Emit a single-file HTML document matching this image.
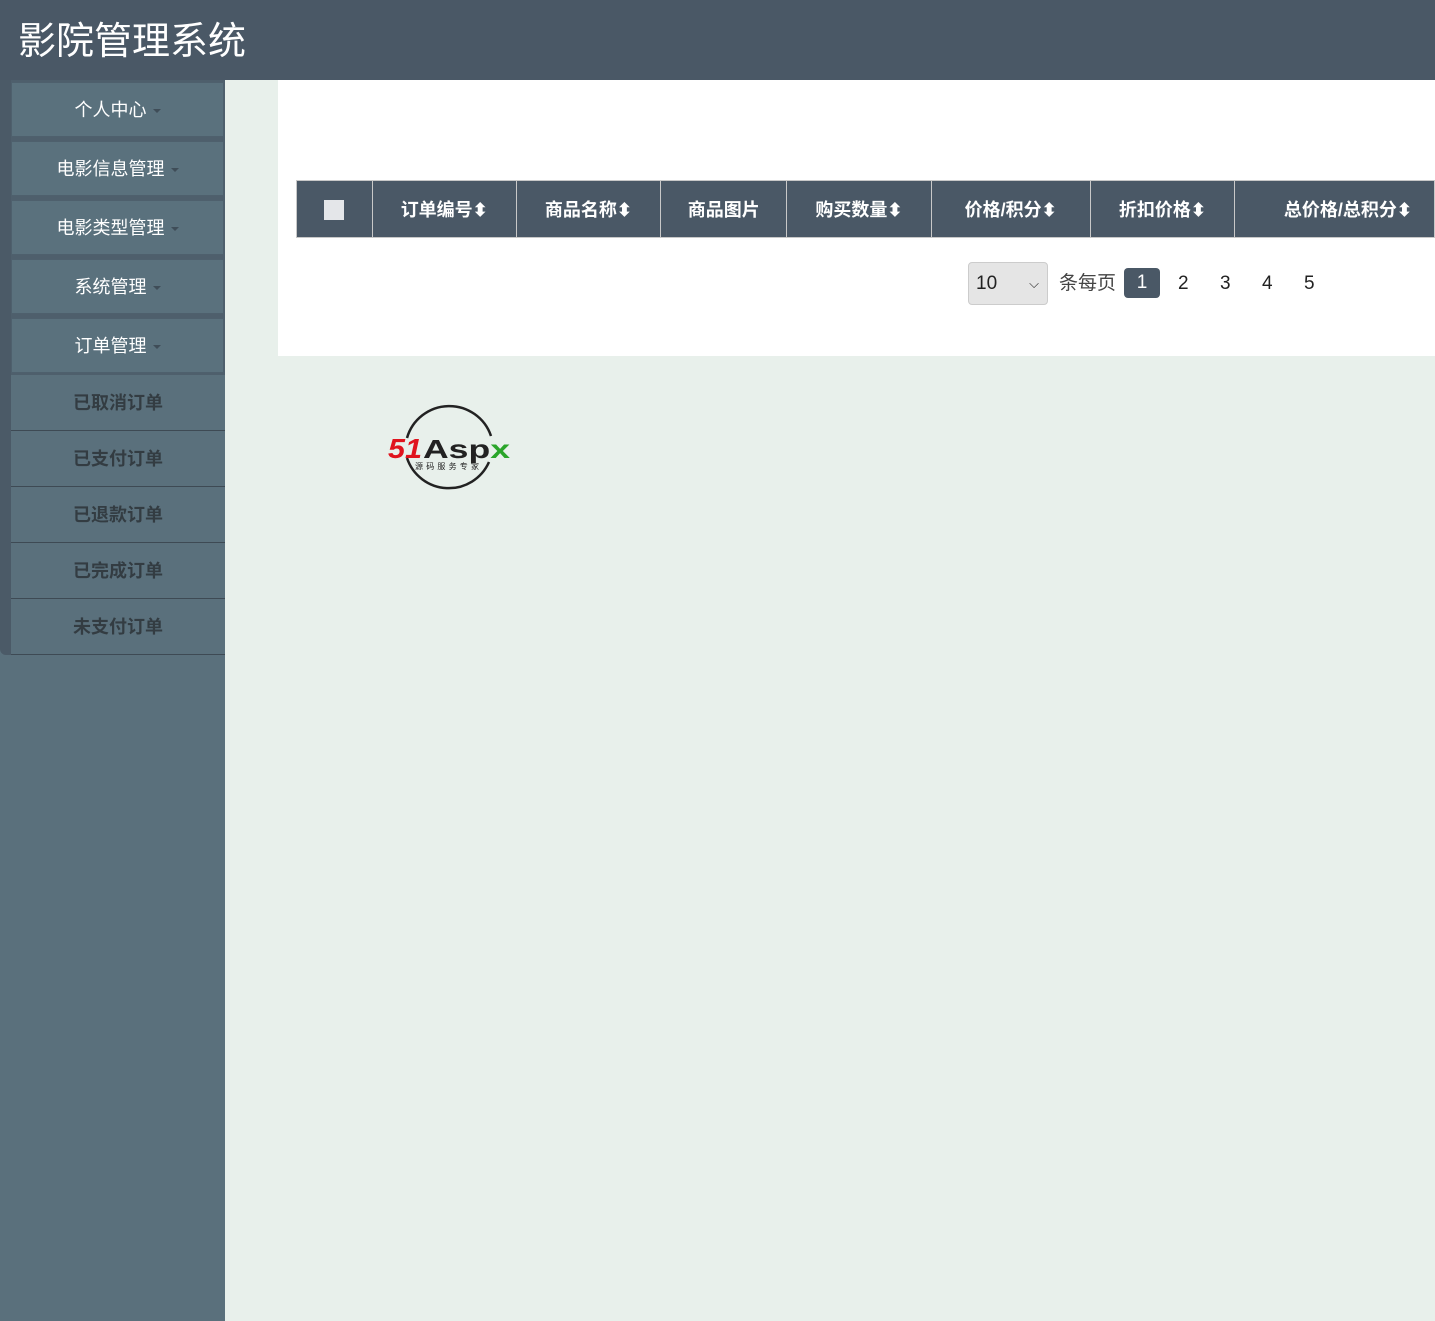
<!DOCTYPE html>
<html><head><meta charset="utf-8"><style>
*{margin:0;padding:0;box-sizing:border-box}
body{width:1435px;height:1321px;background:#e8f0eb;font-family:"Liberation Sans","Noto Sans CJK SC",sans-serif;position:relative;overflow:hidden}
.hd{position:absolute;left:0;top:0;width:1435px;height:80px;background:#4a5866;color:#fff;font-size:38px;line-height:84px;padding-left:18px}
.sb{position:absolute;left:0;top:80px;width:225px;height:1241px;background:#5a707c}
.strip{position:absolute;left:0;top:0;width:11px;height:575px;background:#4b5a67;border-radius:0 0 0 6px}
.m{position:absolute;left:11px;width:213px;height:55px;background:#5a717d;border:1px solid #4e606d;color:#fff;font-size:18px;text-align:center;line-height:55px}
.m i{display:inline-block;width:0;height:0;border-left:4px solid transparent;border-right:4px solid transparent;border-top:4px solid #3f4d58;vertical-align:middle;margin-left:6px}
.gap{position:absolute;left:11px;width:214px;background:#4e5f6c}
.s{position:absolute;left:11px;width:214px;height:56px;border-bottom:1px solid #3e4a54;color:#333c42;font-weight:bold;font-size:18px;text-align:center;line-height:56px}
.pn{position:absolute;left:278px;top:80px;width:1157px;height:276px;background:#fff}
table{position:absolute;left:296px;top:180px;border-collapse:collapse;height:57px}
th{background:#4a5866;color:#fff;font-size:18px;border:1px solid #c8c8c8;font-weight:bold;height:57px;padding:0}
.cb{display:inline-block;width:20px;height:20px;background:#e4e6e9;vertical-align:middle}
.pg{position:absolute;top:262px;font-size:19px;color:#222}
</style></head><body>
<div class="hd">影院管理系统</div>
<div class="sb">
<div class="strip"></div>
<div class="gap" style="top:0;height:295px"></div>
<div class="m" style="top:2px">个人中心<i></i></div>
<div class="m" style="top:61px">电影信息管理<i></i></div>
<div class="m" style="top:120px">电影类型管理<i></i></div>
<div class="m" style="top:179px">系统管理<i></i></div>
<div class="m" style="top:238px">订单管理<i></i></div>
<div class="s" style="top:295px">已取消订单</div>
<div class="s" style="top:351px">已支付订单</div>
<div class="s" style="top:407px">已退款订单</div>
<div class="s" style="top:463px">已完成订单</div>
<div class="s" style="top:519px">未支付订单</div>
</div>
<div class="pn"></div>
<table><tr>
<th style="width:76px"><span class="cb"></span></th>
<th style="width:144px">订单编号⬍</th>
<th style="width:145px">商品名称⬍</th>
<th style="width:126px">商品图片</th>
<th style="width:145px">购买数量⬍</th>
<th style="width:159px">价格/积分⬍</th>
<th style="width:145px">折扣价格⬍</th>
<th style="width:200px;text-align:right;padding-right:22px">总价格/总积分⬍</th>
</tr></table>
<div class="pg" style="left:968px;width:80px;height:43px;background:#e5e5e5;border:1px solid #ccc;border-radius:4px;line-height:41px;padding-left:7px">10<span style="position:absolute;right:8px;font-size:13px">&#x2335;</span></div>
<div class="pg" style="left:1059px;line-height:43px;color:#444">条每页</div>
<div class="pg" style="left:1124px;top:268px;width:36px;height:30px;background:#4a5866;color:#fff;border-radius:4px;text-align:center;line-height:30px">1</div>
<div class="pg" style="left:1178px;line-height:43px">2</div>
<div class="pg" style="left:1220px;line-height:43px">3</div>
<div class="pg" style="left:1262px;line-height:43px">4</div>
<div class="pg" style="left:1304px;line-height:43px">5</div>
<svg style="position:absolute;left:385px;top:400px" width="130" height="96" viewBox="0 0 130 96">
<path d="M22 38 A44 44 0 0 1 106 36" fill="none" stroke="#222" stroke-width="2.5"/>
<path d="M104 62 A44 44 0 0 1 22 58" fill="none" stroke="#222" stroke-width="2.5"/>
<text x="3" y="58" font-family="Liberation Sans" font-style="italic" font-weight="bold" font-size="28" fill="#e0141e" textLength="34" lengthAdjust="spacingAndGlyphs">51</text>
<text x="38" y="58" font-family="Liberation Sans" font-weight="bold" font-size="26" fill="#222" textLength="87" lengthAdjust="spacingAndGlyphs">Asp<tspan fill="#2aa52a">x</tspan></text>
<text x="30" y="69" font-size="8" fill="#222" font-family="Noto Sans CJK SC" textLength="64">源码服务专家</text>
</svg>
</body></html>
